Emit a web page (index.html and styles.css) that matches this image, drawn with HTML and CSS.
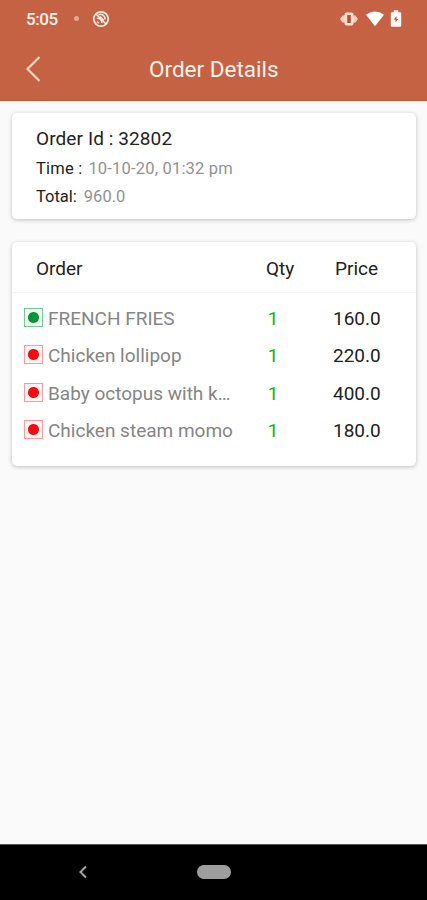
FILE: index.html
```html
<!DOCTYPE html>
<html lang="en">
<head>
<meta charset="utf-8">
<title>Order Details</title>
<link rel="stylesheet" href="styles.css">
</head>
<body>
<header class="top">
  <div class="status">
    <span class="clock">5:05</span>
    <span class="dot"></span>
    <svg class="notice" width="18" height="18" viewBox="0 0 18 18" fill="none" stroke="#ffe9df"><circle cx="9" cy="9" r="7.2" stroke-width="1.8"/><path d="M4 4l10 10" stroke-width="1.6"/><path d="M6.5 4.8c3-1.5 6.8.8 6.5 4.7M4.8 8.2c2.6-.4 5 1.4 5.2 4.8M5 11.5l1.8 1.8M8 6.6l3.8 3.6" stroke-width="1.5"/></svg>
    <svg class="vibrate" width="18" height="16" viewBox="0 0 18 16"><path d="M0 8l2.5-3.5H5v7H2.5zM18 8l-2.5-3.5H13v7h2.5z" fill="#f6cdbd"/><rect x="4.5" y="1.5" width="9" height="13" rx="2" fill="#ffdfd2"/><rect x="7.2" y="4" width="3.6" height="8" fill="#b85230"/></svg>
    <svg class="wifi" width="18" height="16" viewBox="0 0 18 16"><path d="M0 3.7Q9-2.7 18 3.7L9 15.2z" fill="#fff"/></svg>
    <svg class="battery" width="12" height="17" viewBox="0 0 12 17"><path d="M1.8 2.2h2V.3h4.4v1.9h2q1 0 1 1v12.5q0 1-1 1H1.8q-1 0-1-1V3.2q0-1 1-1z" fill="#fff8f2"/><path d="M6.5 6.3L3.8 9.4h1.7v2.9l2.7-3.4H6.5z" fill="#b85230"/></svg>
  </div>
  <div class="bar">
    <svg class="back" width="18" height="28" viewBox="0 0 18 28"><path d="M15.5 2L3.5 14l12 12" fill="none" stroke="#fbd5c4" stroke-width="2.2"/></svg>
    <h1 class="title">Order Details</h1>
  </div>
</header>
<main class="content">
  <section class="card summary">
    <p class="order-id">Order Id : 32802</p>
    <p class="line time"><span>Time :</span><span class="muted">10-10-20, 01:32 pm</span></p>
    <p class="line total"><span>Total:</span><span class="muted">960.0</span></p>
  </section>
  <section class="card items">
    <div class="row head"><span class="name">Order</span><span class="qty">Qty</span><span class="price">Price</span></div>
    <div class="list">
      <div class="row"><i class="mark veg"></i><span class="name">FRENCH FRIES</span><span class="qty">1</span><span class="price">160.0</span></div>
      <div class="row"><i class="mark"></i><span class="name">Chicken lollipop</span><span class="qty">1</span><span class="price">220.0</span></div>
      <div class="row"><i class="mark"></i><span class="name">Baby octopus with k…</span><span class="qty">1</span><span class="price">400.0</span></div>
      <div class="row"><i class="mark"></i><span class="name">Chicken steam momo</span><span class="qty">1</span><span class="price">180.0</span></div>
    </div>
  </section>
</main>
<footer class="nav">
  <svg class="nav-back" width="10" height="14" viewBox="0 0 10 14"><path d="M8 1.5L2.5 7 8 12.5" fill="none" stroke="#a4a4a4" stroke-width="2"/></svg>
  <span class="home"></span>
</footer>
</body>
</html>
```
FILE: styles.css
```css
* { box-sizing: border-box; }
body { margin: 0; width: 427px; height: 900px; display: flex; flex-direction: column; overflow: hidden; background: #fafafa; font-family: Roboto, "Liberation Sans", sans-serif; color: #222; }
p, h1 { margin: 0; font-weight: 400; }
.top { height: 101px; flex: none; background: #c66244; border-bottom: 1px solid #bd5430; color: #fff0e9; }
.status { height: 37px; display: flex; align-items: center; padding: 0 25px 0 26px; }
.clock { width: 32px; font-size: 17px; font-weight: 500; letter-spacing: -.4px; line-height: 20px; margin-top: 1px; }
.dot { width: 5px; height: 5px; margin-left: 16px; border-radius: 50%; background: #e5a891; }
.notice { margin-left: 13px; }
.vibrate { margin-left: auto; }
.wifi { margin-left: 8px; }
.battery { margin-left: 6px; }
.bar { height: 64px; display: flex; align-items: center; }
.back { margin-left: 24px; }
.title { margin-left: 107px; font-size: 22.5px; line-height: 26px; }
.content { flex: 1; padding: 12px 11px 0 12px; }
.card { background: #fff; border-radius: 5px; box-shadow: 0 1px 4px rgba(0,0,0,.24); }
.summary { height: 106px; padding: 14px 25px 0 24px; }
.order-id { font-size: 19px; line-height: 24px; letter-spacing: .1px; }
.line { display: flex; font-size: 16.5px; line-height: 22px; }
.time { margin-top: 7px; gap: 6px; letter-spacing: .2px; }
.total { margin-top: 6px; gap: 7px; }
.muted { color: #929292; }
.items { height: 224px; margin-top: 23px; }
.row { height: 37.3px; display: flex; align-items: center; padding-left: 12px; font-size: 19px; }
.row.head { height: 51px; padding-left: 24px; border-bottom: 1px solid #f3f3f3; padding-top: 2px; }
.list { padding-top: 7px; }
.name { flex: 1; white-space: nowrap; }
.list .name { color: #858585; margin-left: 5px; }
.qty { width: 28px; text-align: center; }
.list .qty { width: 14px; margin-right: 53px; color: #12b512; }
.head .qty { margin-right: 41px; }
.price { width: 81px; }
.list .price { width: 83px; }
.mark { width: 19px; height: 19px; flex: none; margin-top: -2px; border: 1px solid #f99; background: radial-gradient(circle at center, #f20c12 5px, #fff4f4 6px); }
.mark.veg { border-color: #78c891; background: radial-gradient(circle at center, #079639 5px, #f0fff4 6px); }
.nav { height: 56px; flex: none; display: flex; align-items: center; padding-bottom: 2px; background: #000; border-top: 1px solid #555; }
.nav-back { margin-left: 78px; }
.home { width: 34px; height: 14px; margin-left: 109px; border-radius: 7px; background: #9e9e9e; }
```
